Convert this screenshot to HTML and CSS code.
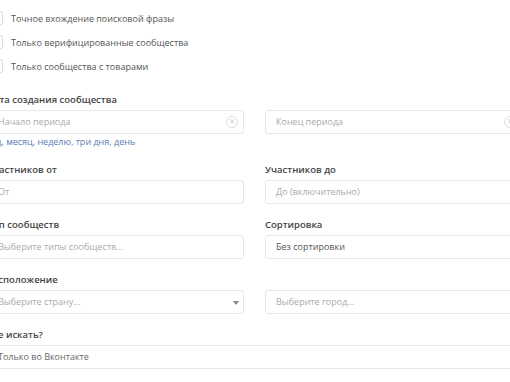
FILE: index.html
```
<!DOCTYPE html>
<html lang="ru">
<head>
  <meta charset="UTF-8">
  <meta name="viewport" content="width=device-width, initial-scale=1.0">
  <title>Поиск сообществ</title>
  <link rel="stylesheet" href="styles.css">
</head>
<body>
  <div class="form">
    <!-- Флажки -->
    <div class="checks">
      <label class="check"><span class="box"></span>Точное вхождение поисковой фразы</label>
      <label class="check"><span class="box"></span>Только верифицированные сообщества</label>
      <label class="check"><span class="box"></span>Только сообщества с товарами</label>
    </div>

    <div class="row">
      <div class="field">
        <div class="label">Дата создания сообщества</div>
        <div class="input placeholder">Начало периода<span class="clear">&times;</span></div>
        <div class="hint">год, месяц, неделю, три дня, день</div>
      </div>
      <div class="field">
        <div class="label">&nbsp;</div>
        <div class="input placeholder">Конец периода<span class="clear">&times;</span></div>
      </div>
    </div>

    <div class="row">
      <div class="field">
        <div class="label">Участников от</div>
        <div class="input placeholder">От</div>
      </div>
      <div class="field">
        <div class="label">Участников до</div>
        <div class="input placeholder">До (включительно)</div>
      </div>
    </div>

    <div class="row">
      <div class="field">
        <div class="label">Тип сообществ</div>
        <div class="input placeholder">Выберите типы сообществ...</div>
      </div>
      <div class="field">
        <div class="label">Сортировка</div>
        <div class="input">Без сортировки</div>
      </div>
    </div>

    <div class="row">
      <div class="field">
        <div class="label">Расположение</div>
        <div class="input placeholder">Выберите страну...<span class="arrow"></span></div>
      </div>
      <div class="field">
        <div class="label">&nbsp;</div>
        <div class="input placeholder">Выберите город...</div>
      </div>
    </div>

    <div class="field">
      <div class="label">Где искать?</div>
      <div class="input value">Только во Вконтакте</div>
    </div>
  </div>
</body>
</html>
```
FILE: styles.css
```
body {
  margin: 0;
  background: #fff;
  font-family: "Open Sans", Arial, sans-serif;
  font-size: 9px;
  color: #555;
  overflow: hidden;
}

.form {
  width: 535px;
  margin-left: -13px;
}

.checks {
  padding-top: 6px;
  margin-bottom: 15px;
}

.check {
  display: flex;
  align-items: center;
  height: 24px;
  padding-left: 2px;
  color: #555;
}

.box {
  width: 12px;
  height: 12px;
  border: 1px solid #ddd;
  border-radius: 2px;
  margin-right: 8px;
}

.row {
  display: grid;
  grid-template-columns: 257px 257px;
  gap: 21px;
}

.field {
  margin-bottom: 14px;
}

.label {
  font-size: 9.5px;
  font-weight: 600;
  line-height: 14px;
  margin-bottom: 3px;
  color: #444;
}

.input {
  position: relative;
  height: 24px;
  box-sizing: border-box;
  border: 1px solid #e6e6e6;
  border-radius: 3px;
  padding: 0 10px;
  line-height: 22px;
  color: #555;
}

.placeholder {
  color: #aaa;
}

.value {
  color: #666;
}

.clear {
  position: absolute;
  right: 5px;
  top: 5px;
  width: 10px;
  height: 10px;
  border: 1px solid #ddd;
  border-radius: 50%;
  color: #ccc;
  font-size: 10px;
  line-height: 9px;
  text-align: center;
}

.arrow {
  position: absolute;
  right: 4px;
  top: 10px;
  border-left: 3px solid transparent;
  border-right: 3px solid transparent;
  border-top: 4px solid #888;
}

.hint {
  margin-top: 1px;
  line-height: 14px;
  color: #5b7cb8;
}
```
